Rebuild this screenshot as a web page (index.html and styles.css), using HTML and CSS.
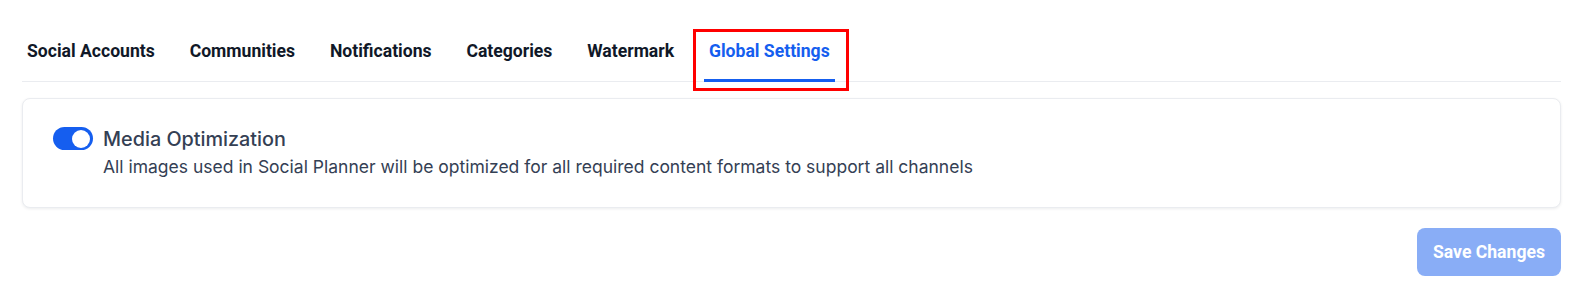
FILE: index.html
```html
<!DOCTYPE html>
<html lang="en">
<head>
  <meta charset="UTF-8" />
  <meta name="viewport" content="width=device-width, initial-scale=1.0" />
  <title>Social Planner — Settings</title>
  <link rel="stylesheet" href="styles.css">
</head>
<body>
  <main class="page">
    <nav class="tabs" aria-label="Settings sections">
      <a class="tab" href="#">Social Accounts</a>
      <a class="tab" href="#">Communities</a>
      <a class="tab" href="#">Notifications</a>
      <a class="tab" href="#">Categories</a>
      <a class="tab" href="#">Watermark</a>
      <a class="tab active" href="#">Global Settings<span class="highlight"></span></a>
    </nav>

    <section class="card">
      <div class="setting-row">
        <button class="switch on" type="button" aria-pressed="true" aria-label="Media Optimization">
          <span class="knob"></span>
        </button>
        <div class="setting-text">
          <h2 class="setting-title">Media Optimization</h2>
          <p class="setting-desc">All images used in Social Planner will be optimized for all required content formats to support all channels</p>
        </div>
      </div>
    </section>

    <div class="actions">
      <button class="save-btn" type="button" disabled>Save Changes</button>
    </div>
  </main>
</body>
</html>
```

FILE: styles.css
```css
:root {
  --primary: #155eef;
  --ink: #101828;
  --text: #344054;
  --line: #eaecf0;
}

* { box-sizing: border-box; }

body {
  margin: 0;
  background: #fff;
  color: var(--text);
  font-family: Inter, "Noto Sans", sans-serif;
}

a { color: inherit; text-decoration: none; }

.page {
  padding: 0 22px;
}

/* tab strip, underline of the active tab sits on the grey rule */
.tabs {
  display: flex;
  gap: 24.8px;
  padding-top: 38px;
  border-bottom: 1px solid var(--line);
}

.tab {
  position: relative;
  display: block;
  padding: 0 5px 15px;
  margin-bottom: -1px;
  border-bottom: 3px solid transparent;
  font-family: Roboto, "Liberation Sans", sans-serif;
  font-size: 17.6px;
  line-height: 26px;
  font-weight: 700;
  color: var(--ink);
}

.tab.active {
  color: var(--primary);
  border-bottom-color: var(--primary);
}

/* red annotation frame round the active tab */
.highlight {
  position: absolute;
  top: -9px;
  left: -11px;
  right: -14px;
  bottom: -12px;
  border: 3px solid #f00;
  pointer-events: none;
}

.card {
  margin-top: 16px;
  padding: 25px 30px 27px;
  background: #fff;
  border: 1px solid var(--line);
  border-radius: 8px;
  box-shadow: 0 1px 3px rgba(16, 24, 40, 0.08);
}

.setting-row {
  display: flex;
  align-items: flex-start;
  gap: 10px;
}

.switch {
  flex: none;
  width: 40px;
  height: 23px;
  margin-top: 3px;
  padding: 2px 3px;
  border: 0;
  border-radius: 12px;
  background: #d0d5dd;
  display: flex;
  align-items: center;
}

.switch.on {
  background: var(--primary);
  justify-content: flex-end;
}

.knob {
  width: 18px;
  height: 18px;
  border-radius: 50%;
  background: #fff;
}

.setting-title {
  margin: 0;
  font-size: 19.8px;
  line-height: 30px;
  font-weight: 500;
  color: var(--text);
}

.setting-desc {
  margin: 0;
  font-size: 17.5px;
  line-height: 26px;
  color: var(--text);
}

.actions {
  display: flex;
  justify-content: flex-end;
  margin-top: 20px;
}

.save-btn {
  height: 48px;
  padding: 0 16px;
  border: 0;
  border-radius: 8px;
  background: var(--primary);
  opacity: 0.5;
  color: #fff;
  font-family: Roboto, "Liberation Sans", sans-serif;
  font-size: 17.6px;
  font-weight: 700;
}
```
